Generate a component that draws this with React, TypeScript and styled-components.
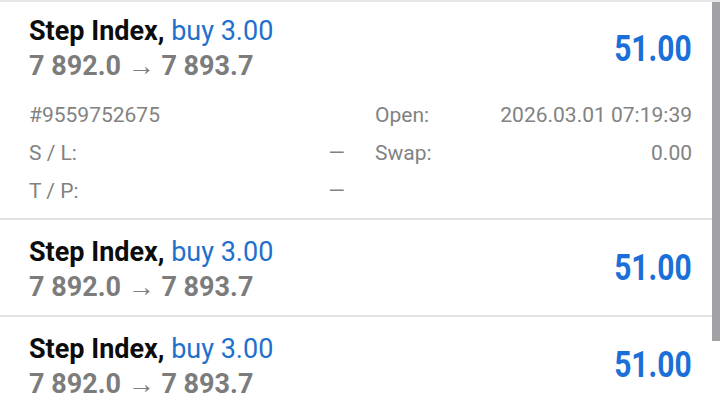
import React from 'react';
import styled, { createGlobalStyle } from 'styled-components';

const GlobalStyle = createGlobalStyle`
  html, body {
    margin: 0;
    padding: 0;
    background: #ffffff;
    overflow: hidden;
  }
  body {
    font-family: Roboto, "Noto Sans", sans-serif;
  }
`;

interface Trade {
  id: string;
  symbol: string;
  side: string;
  volume: string;
  priceOpen: string;
  priceNow: string;
  profit: string;
  openTime: string;
  sl: string;
  tp: string;
  swap: string;
  expanded?: boolean;
}

const trades: Trade[] = [
  {
    id: '9559752675',
    symbol: 'Step Index',
    side: 'buy',
    volume: '3.00',
    priceOpen: '7 892.0',
    priceNow: '7 893.7',
    profit: '51.00',
    openTime: '2026.03.01 07:19:39',
    sl: '—',
    tp: '—',
    swap: '0.00',
    expanded: true,
  },
  {
    id: '9559752676',
    symbol: 'Step Index',
    side: 'buy',
    volume: '3.00',
    priceOpen: '7 892.0',
    priceNow: '7 893.7',
    profit: '51.00',
    openTime: '2026.03.01 07:19:39',
    sl: '—',
    tp: '—',
    swap: '0.00',
  },
  {
    id: '9559752677',
    symbol: 'Step Index',
    side: 'buy',
    volume: '3.00',
    priceOpen: '7 892.0',
    priceNow: '7 893.7',
    profit: '51.00',
    openTime: '2026.03.01 07:19:39',
    sl: '—',
    tp: '—',
    swap: '0.00',
  },
];

const Screen = styled.div`
  position: relative;
  width: 720px;
  height: 405px;
  overflow: hidden;
  border-top: 2px solid #e6e6e6;
  box-sizing: border-box;
`;

// list is scrolled a few pixels down
const List = styled.div`
  display: flex;
  flex-direction: column;
  margin-top: -3px;
`;

const Row = styled.div<{ $expanded?: boolean }>`
  border-bottom: 2px solid #e4e4e4;
  padding: 0 28px ${(p) => (p.$expanded ? '8px' : '0')} 29px;
`;

const Head = styled.div<{ $expanded?: boolean }>`
  display: flex;
  align-items: center;
  justify-content: space-between;
  min-height: ${(p) => (p.$expanded ? '98px' : '95px')};
`;

const Title = styled.div`
  align-self: flex-start;
  margin-top: 15px;
  display: flex;
  flex-direction: column;
`;

const Symbol = styled.div`
  font-size: 27px;
  line-height: 35px;
  font-weight: 700;
  color: #0c0c0c;
  white-space: nowrap;
`;

const Side = styled.span`
  font-weight: 400;
  color: #1f70cc;
`;

const Prices = styled.div`
  font-size: 27px;
  line-height: 35px;
  font-weight: 700;
  color: #7c7c7c;
  white-space: nowrap;
`;

const Profit = styled.div`
  font-size: 37px;
  line-height: 1;
  font-weight: 700;
  color: #1a6fd8;
  transform: scaleX(0.81);
  transform-origin: right center;
`;

const Details = styled.div`
  display: grid;
  grid-template-columns: 316px 1fr;
  column-gap: 30px;
  margin-top: -1px;
`;

const Column = styled.div`
  display: flex;
  flex-direction: column;
`;

const Line = styled.div`
  display: flex;
  justify-content: space-between;
  height: 38px;
  font-size: 21px;
  line-height: 38px;
  color: #828282;
  white-space: nowrap;
`;

const ScrollThumb = styled.div`
  position: absolute;
  right: 0;
  top: 0;
  width: 8px;
  height: 339px;
  background: #a2a1a5;
`;

const TradeRow = ({ t }: { t: Trade }) => (
  <Row $expanded={t.expanded}>
    <Head $expanded={t.expanded}>
      <Title>
        <Symbol>
          {t.symbol}, <Side>{t.side} {t.volume}</Side>
        </Symbol>
        <Prices>
          {t.priceOpen} → {t.priceNow}
        </Prices>
      </Title>
      <Profit>{t.profit}</Profit>
    </Head>
    {t.expanded ? (
      <Details>
        <Column>
          <Line>
            <span>#{t.id}</span>
          </Line>
          <Line>
            <span>S / L:</span>
            <span>{t.sl}</span>
          </Line>
          <Line>
            <span>T / P:</span>
            <span>{t.tp}</span>
          </Line>
        </Column>
        <Column>
          <Line>
            <span>Open:</span>
            <span>{t.openTime}</span>
          </Line>
          <Line>
            <span>Swap:</span>
            <span>{t.swap}</span>
          </Line>
        </Column>
      </Details>
    ) : null}
  </Row>
);

export default function App() {
  return (
    <>
      <GlobalStyle />
      <Screen>
        <List>
          {trades.map((t) => (
            <TradeRow key={t.id} t={t} />
          ))}
        </List>
        <ScrollThumb />
      </Screen>
    </>
  );
}
